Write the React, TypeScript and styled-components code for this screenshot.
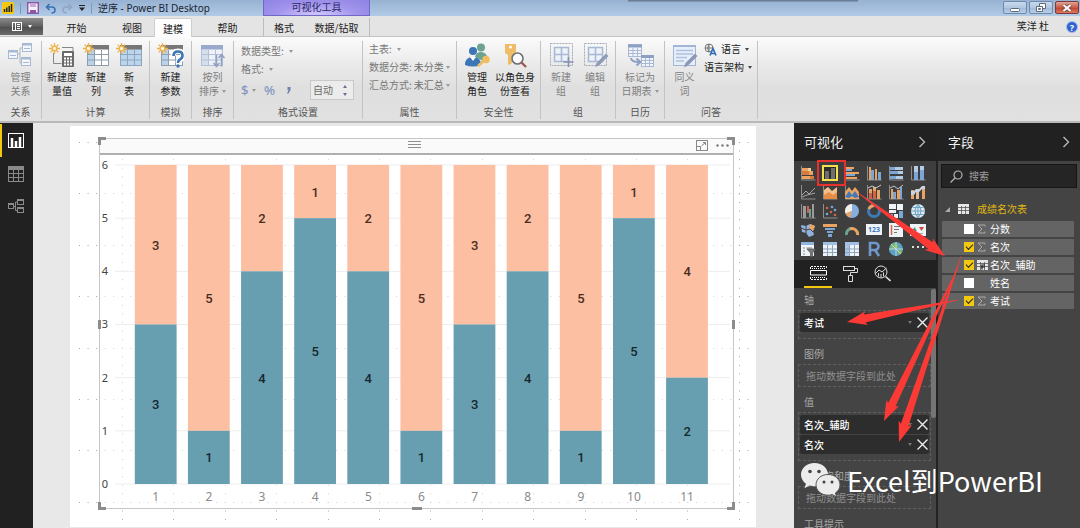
import React from "react";
import styled, { createGlobalStyle, css } from "styled-components";

const SANS = `"Noto Sans", "Noto Sans CJK SC", sans-serif`;
const CJK = `"Noto Sans CJK SC", "Noto Sans", sans-serif`;

const GlobalStyle = createGlobalStyle`
  *, *::before, *::after { box-sizing: border-box; }
  body { margin: 0; font-family: ${CJK}; font-size: 10px; line-height: 14px; background: #e8e8e8; }
  button, input, select { font: inherit; color: inherit; margin: 0; padding: 0; border: 0; background: none; }
  button { cursor: pointer; }
  h2, p, ul { margin: 0; padding: 0; font: inherit; }
  ul { list-style: none; }
  svg { display: block; flex: none; }
`;

/* ---------- shell ---------- */

const Shell = styled.div`
  position: relative;
  display: flex;
  flex-direction: column;
  height: 100vh;
  overflow: hidden;
`;

const TitleBar = styled.header`
  position: relative;
  display: flex;
  align-items: stretch;
  height: 16px;
  flex: none;
  background: linear-gradient(#97b2d2, #b1cae6);
`;

const TopShade = styled.div`
  position: absolute;
  top: 0;
  right: 222px;
  width: 230px;
  height: 2px;
  background: linear-gradient(#5f7288, #8aa2c0);
`;

const QuickAccess = styled.div`
  display: flex;
  align-items: center;
  gap: 6px;
  width: 98px;
  padding-left: 2px;
`;

const QuickButton = styled.button`
  display: flex;
`;

const Divider = styled.span`
  width: 1px;
  height: 11px;
  background: #7f99ba;
`;

const WindowTitle = styled.div`
  width: 165px;
  font-family: ${SANS};
  font-size: 10px;
  line-height: 16px;
  color: #1c2733;
  white-space: nowrap;
`;

const ContextTitle = styled.div`
  width: 107px;
  text-align: center;
  line-height: 13px;
  color: #2c2a66;
  background: radial-gradient(ellipse at 50% 110%, #d6ccff 0, #a294ec 55%, #8d83e4 100%);
  border: solid #6f68c8;
  border-width: 0 1px 1px;
`;

const WindowButtons = styled.div`
  display: flex;
  gap: 2px;
  margin-left: auto;
  padding: 1px 1px 2px 0;
`;

const WindowButton = styled.button<{ $close?: boolean }>`
  display: flex;
  align-items: center;
  justify-content: center;
  width: 24px;
  border: 1px solid ${(p) => (p.$close ? "#7d3a36" : "#7089a8")};
  border-radius: 2px;
  background: ${(p) =>
    p.$close
      ? "linear-gradient(#e0a596, #cb5946 50%, #c0412d 51%, #d97961)"
      : "linear-gradient(#c8daee, #b2c8e1 50%, #9fb8d5 51%, #b8cfe8)"};
`;

const TabRow = styled.nav`
  display: flex;
  align-items: stretch;
  height: 21px;
  flex: none;
  padding-top: 2px;
  background: #e4e4e4;
  border-bottom: 1px solid #c4c4c4;
`;

const FileButton = styled.button`
  display: flex;
  align-items: center;
  justify-content: center;
  gap: 6px;
  width: 43px;
  height: 17px;
  background: linear-gradient(#8b8b8b, #5c5c5c 50%, #4c4c4c 51%, #6c6c6c);
`;

const Tab = styled.button<{ $w: number; $active?: boolean; $edge?: "left" | "right" }>`
  width: ${(p) => p.$w}px;
  height: 19px;
  line-height: 19px;
  text-align: center;
  color: #222;
  white-space: nowrap;
  ${(p) =>
    p.$active &&
    css`
      background: #fdfdfd;
      border: solid #cfcfcf;
      border-width: 1px 1px 0;
      border-radius: 2px 2px 0 0;
      line-height: 17px;
    `}
  ${(p) => p.$edge && `border-${p.$edge}: 1px solid #bdbdbd;`}
`;

const UserName = styled.span`
  margin-left: auto;
  padding-right: 17px;
  line-height: 16px;
  color: #222;
`;

const HelpButton = styled.button`
  width: 12px;
  height: 12px;
  margin: 3px 2px 0 0;
  border: 1px solid #a8c0ea;
  border-radius: 50%;
  background: #2f62cf;
  color: #fff;
  font-family: ${SANS};
  font-size: 9px;
  font-weight: 700;
  line-height: 9px;
`;

/* ---------- ribbon ---------- */

const Ribbon = styled.section`
  display: flex;
  height: 86px;
  flex: none;
  padding: 4px 0 2px;
  background: linear-gradient(#fbfbfb, #e9e9e9 35%, #dfdfdf 60%, #e1e1e1);
  border-bottom: 2px solid #b9b9b9;
`;

const Group = styled.div<{ $w: number }>`
  display: flex;
  flex-direction: column;
  width: ${(p) => p.$w}px;
  flex: none;
  border-right: 1px solid #c3c3c3;
`;

const GroupBody = styled.div<{ $pad?: number; $gap?: number }>`
  display: flex;
  justify-content: ${(p) => (p.$pad === undefined ? "center" : "flex-start")};
  gap: ${(p) => p.$gap ?? 0}px;
  padding-left: ${(p) => p.$pad ?? 0}px;
  height: 65px;
`;

const GroupName = styled.div`
  text-align: center;
  color: #555;
  line-height: 14px;
`;

const BigButton = styled.button<{ $w: number }>`
  display: flex;
  flex-direction: column;
  align-items: center;
  gap: 2px;
  width: ${(p) => p.$w}px;
  padding-top: 2px;
  line-height: 14px;
  color: #222;
  white-space: nowrap;
  &:disabled { color: #808080; }
`;

const Lines = styled.span`
  display: flex;
  flex-direction: column;
  align-items: center;
`;

const Line = styled.span`
  display: flex;
  align-items: center;
  gap: 3px;
`;

const Caret = styled.i<{ $c?: string; $up?: boolean }>`
  width: 0;
  height: 0;
  border: 2px solid transparent;
  ${(p) => (p.$up ? "border-bottom" : "border-top")}: 3px solid ${(p) => p.$c ?? "#999"};
  ${(p) => (p.$up ? "border-top" : "border-bottom")}: 0;
`;

const FieldStack = styled.div<{ $gap: number; $top?: number }>`
  display: flex;
  flex-direction: column;
  gap: ${(p) => p.$gap}px;
  padding-top: ${(p) => p.$top ?? 0}px;
`;

const FormatRow = styled.div<{ $gap?: number }>`
  display: flex;
  align-items: center;
  gap: ${(p) => p.$gap ?? 2}px;
  color: #777;
  white-space: nowrap;
`;

const PlainSelect = styled.select<{ $w: number }>`
  appearance: none;
  width: ${(p) => p.$w}px;
  height: 14px;
  color: #6f6f6f;
`;

const SymbolButton = styled.button`
  display: flex;
  align-items: center;
  gap: 4px;
  width: 20px;
  height: 20px;
  font-family: ${SANS};
  font-size: 13px;
  font-weight: 500;
  color: #8298c0;
`;

const Spinner = styled.div`
  display: flex;
  align-items: center;
  width: 44px;
  height: 20px;
  padding: 0 4px 0 2px;
  border: 1px solid #c9c9c9;
  background: #ececec;
`;

const SpinInput = styled.input`
  width: 30px;
  color: #6b6b6b;
`;

const SpinArrows = styled.span`
  display: flex;
  flex-direction: column;
  gap: 5px;
`;

const SmallButton = styled.button`
  display: flex;
  align-items: center;
  gap: 4px;
  height: 14px;
  color: #222;
  white-space: nowrap;
`;

/* ---------- workspace ---------- */

const Workspace = styled.main`
  display: flex;
  flex: 1;
  min-height: 0;
  background: #e8e8e8;
`;

const ViewBar = styled.nav`
  width: 33px;
  flex: none;
  padding-top: 1px;
  background: #212121;
`;

const ViewButton = styled.button<{ $active?: boolean }>`
  display: flex;
  align-items: center;
  justify-content: center;
  width: 100%;
  height: 33px;
  padding-right: 3px;
  border-left: 2px solid ${(p) => (p.$active ? "#f2c811" : "transparent")};
`;

const CanvasArea = styled.div`
  display: flex;
  flex: 1;
  min-width: 0;
  padding: 3px 38px 1px 37px;
`;

const Sheet = styled.div`
  position: relative;
  display: flex;
  flex: 1;
  min-width: 0;
  padding: 12px 22px 18px 29px;
  background: #fff;
`;

const DotGrid = styled.svg`
  position: absolute;
  inset: 0;
  width: 100%;
  height: 100%;
`;

const Visual = styled.section`
  position: relative;
  display: flex;
  flex-direction: column;
  flex: 1;
  min-width: 0;
  border: 1px solid #c6c6c6;
  background: rgba(255, 255, 255, 0.5);
`;

const VisualHeader = styled.div`
  display: grid;
  grid-template-columns: 1fr auto 1fr;
  height: 16px;
  flex: none;
  padding: 0 4px 2px 0;
  background: #fafafa;
  border-bottom: 2px solid #b0b0b0;
`;

const Grip = styled.span`
  width: 13px;
  height: 7px;
  margin-top: 2px;
  border: solid #8f8f8f;
  border-width: 1px 0;
  background: linear-gradient(#8f8f8f, #8f8f8f) center / 100% 1px no-repeat;
`;

const VisualTools = styled.div`
  display: flex;
  justify-content: flex-end;
  gap: 8px;
`;

const ChartSvg = styled.svg`
  width: 100%;
  flex: 1;
  min-height: 0;
`;

const Handle = styled.i<{ $v: "top" | "bottom" | "mid"; $h: "left" | "right" | "mid" }>`
  position: absolute;
  ${(p) => {
    const corner = p.$v !== "mid" && p.$h !== "mid";
    const v = p.$v === "mid" ? "top: calc(50% - 4px);" : `${p.$v}: -2px;`;
    const h = p.$h === "mid" ? "left: calc(50% - 5px);" : `${p.$h}: -2px;`;
    if (corner)
      return `${v}${h} width: 8px; height: 8px; border-${p.$v}: 3px solid #8c8c8c; border-${p.$h}: 3px solid #8c8c8c;`;
    return `${v}${h} background: #8c8c8c; width: ${p.$v === "mid" ? 3 : 10}px; height: ${p.$v === "mid" ? 9 : 3}px;`;
  }}
`;

/* ---------- right panes ---------- */

const Pane = styled.aside<{ $w: number; $rule?: boolean }>`
  display: flex;
  flex-direction: column;
  width: ${(p) => p.$w}px;
  flex: none;
  background: #444;
  color: #fff;
  ${(p) => p.$rule && "border-right: 2px solid #222;"}
`;

const PaneHeader = styled.div`
  display: flex;
  align-items: center;
  justify-content: space-between;
  height: 38px;
  flex: none;
  padding: 0 10px;
  background: #212121;
`;

const PaneTitle = styled.h2`
  font-size: 13px;
  line-height: 18px;
  color: #f2f2f2;
`;

const IconButton = styled.button`
  display: flex;
  align-items: center;
  justify-content: center;
`;

const Gallery = styled.div`
  display: grid;
  grid-template-columns: repeat(6, 22px);
  grid-auto-rows: 19px;
  flex: none;
  height: 99px;
  padding: 2px 3px;
  background: #3e3e3e;
`;

const PaneTabs = styled.div`
  display: flex;
  gap: 4px;
  height: 28px;
  flex: none;
  padding-left: 10px;
  background: #212121;
`;

const PaneTab = styled.button<{ $active?: boolean }>`
  display: flex;
  justify-content: center;
  align-items: center;
  width: 28px;
  border-bottom: 2px solid ${(p) => (p.$active ? "#f2c811" : "transparent")};
`;

const Wells = styled.div`
  display: flex;
  flex: 1;
  min-height: 0;
  overflow: hidden;
  background: #444;
`;

const WellList = styled.div`
  display: flex;
  flex-direction: column;
  flex: 1;
  gap: 8px;
  padding: 5px 0 0 4px;
`;

const ScrollThumb = styled.div`
  width: 5px;
  height: 129px;
  margin-top: 1px;
  border-radius: 2px;
  background: #757575;
`;

const WellSection = styled.section`
  display: flex;
  flex-direction: column;
  flex: none;
  gap: 3px;
`;

const WellName = styled.h2`
  padding-left: 6px;
  line-height: 14px;
  color: #a8a8a8;
`;

const WellBox = styled.div<{ $filled?: boolean }>`
  display: flex;
  flex-direction: column;
  gap: 1px;
  padding: ${(p) => (p.$filled ? "2px 1px 6px" : "0 7px")};
  line-height: ${(p) => (p.$filled ? 14 : 21)}px;
  border: 1px dashed #5f5f5f;
  color: #8f8f8f;
`;

const WellItem = styled.div`
  display: flex;
  align-items: center;
  height: 19px;
  padding: 0 1px 0 4px;
  gap: 5px;
  border-radius: 2px;
  background: #2d2d2d;
  color: #fff;
`;

const WellItemName = styled.span`
  flex: 1;
  font-weight: 500;
`;

const FieldsBody = styled.div`
  padding: 3px 3px 0;
`;

const SearchBox = styled.label`
  display: flex;
  align-items: center;
  gap: 6px;
  height: 24px;
  padding-left: 8px;
  border: 1px solid #161616;
  background: #252525;
`;

const SearchInput = styled.input`
  flex: 1;
  min-width: 0;
  outline: 0;
  &::placeholder { color: #a0a0a0; opacity: 1; }
`;

const TableRow = styled.div`
  display: flex;
  align-items: center;
  height: 18px;
  margin: 12px 0 3px;
  padding-left: 4px;
  gap: 8px;
  color: #e3b90f;
`;

const FieldList = styled.ul`
  display: flex;
  flex-direction: column;
  gap: 2px;
  padding: 0 3px 0 1px;
`;

const FieldRow = styled.label`
  display: flex;
  align-items: center;
  height: 16px;
  gap: 3px;
  padding-left: 22px;
  background: #646464;
  border-radius: 1px;
  color: #fff;
`;

const FieldKind = styled.span`
  display: flex;
  width: 10px;
`;

const Check = styled.input`
  appearance: none;
  width: 10px;
  height: 10px;
  background: #fff;
  &:checked { background: #f2c811; }
  &:checked::after {
    content: "";
    display: block;
    width: 7px;
    height: 4px;
    margin: 2px 0 0 2px;
    border: solid #222;
    border-width: 0 0 1px 1px;
    transform: rotate(-45deg);
  }
`;

/* ---------- overlays ---------- */

const Annotations = styled.svg`
  position: absolute;
  top: 0;
  right: 0;
  pointer-events: none;
`;

const Watermark = styled.div`
  position: absolute;
  right: 37px;
  bottom: 29px;
  display: flex;
  align-items: center;
  gap: 6px;
  font-size: 27px;
  line-height: 36px;
  color: #fff;
  white-space: nowrap;
  pointer-events: none;
`;

/* ---------- ribbon icons ---------- */

const PALE = "#a9b9d3";

const Burst = () => (
  <g stroke="#eeb04a" strokeWidth="1.3">
    <path d="M5.5 0v11M0 5.5h11M1.6 1.6l7.8 7.8M9.4 1.6L1.6 9.4" />
    <circle cx="5.5" cy="5.5" r="2.4" fill="#fff3d4" />
  </g>
);

const RibbonIcon = ({ children }: { children: React.ReactNode }) => (
  <svg width="27" height="25" viewBox="0 0 27 25" fill="none">{children}</svg>
);

const TableShape = ({ fill = "#fff", left = fill, head = "#777", line = "#8f9dac" }) => (
  <g>
    <rect x="4.5" y="2.5" width="21" height="20" fill={fill} stroke={line} />
    <rect x="5" y="7" width="6.5" height="15" fill={left} />
    <rect x="4" y="2" width="22" height="4.5" fill={head} />
    <path d="M5 11.5h20M5 17h20M11.5 7v15M18.5 7v15" stroke={line} />
  </g>
);

const MiniTable = ({ x, y, w = 9, h = 8, c = PALE }: { x: number; y: number; w?: number; h?: number; c?: string }) => (
  <g transform={`translate(${x} ${y})`}>
    <rect x=".5" y=".5" width={w - 1} height={h - 1} fill="#f3f6fb" stroke={c} />
    <rect width={w} height="2.5" fill={c} />
    <path d={`M2 ${h - 3.5}h${w - 4}`} stroke={c} />
  </g>
);

const icons = {
  relations: (
    <RibbonIcon>
      <path d="M10 11h3V5h4M13 11v9h3" stroke="#b3b3b3" />
      <MiniTable x={1} y={7} w={10} h={9} /><MiniTable x={15} y={0} w={10} h={9} /><MiniTable x={14} y={14} w={10} h={9} />
    </RibbonIcon>
  ),
  measure: (
    <RibbonIcon>
      <path d="M4.5 10v10.500h8M13 4.500h11v6" stroke="#888" />
      <rect x="13" y="8" width="12" height="16" rx="1" fill="#6a6a6a" />
      <rect x="15" y="10" width="8" height="3" fill="#fff" />
      <path d="M15 15.500h8M15 18.500h8M15 21.500h8" stroke="#fff" strokeWidth="2" strokeDasharray="2 1" />
      <Burst />
    </RibbonIcon>
  ),
  column: <RibbonIcon><TableShape left="#b9d3ec" /><Burst /></RibbonIcon>,
  table: <RibbonIcon><TableShape fill="#bdd5ea" line="#8ba6c0" /><Burst /></RibbonIcon>,
  param: (
    <RibbonIcon>
      <TableShape left="#b9d3ec" />
      <path d="M16 13q0-5 5-5t5 4.500q0 3-3 4.200-2 1-2 3.300" stroke="#fff" strokeWidth="5" />
      <path d="M16.500 13q0-4.500 4.500-4.500t4.500 4q0 2.500-2.500 4-2 1-2 3.500" stroke="#3d76b5" strokeWidth="2.600" />
      <circle cx="21" cy="23" r="1.700" fill="#3d76b5" />
      <Burst />
    </RibbonIcon>
  ),
  sort: (
    <RibbonIcon>
      <g transform="translate(-2 0)"><TableShape fill="#eef1f7" left="#d5deec" head="#98a9cb" line="#b4c0d8" /></g>
      <path d="M17.500 12v11M14.500 20l3 3.500 3-3.500M22.500 23.500V12M19.500 15l3-3.500 3 3.500" stroke="#93a2bf" strokeWidth="1.600" />
    </RibbonIcon>
  ),
  roles: (
    <RibbonIcon>
      <circle cx="17" cy="4.500" r="4" fill="#6ba38e" />
      <path d="M11 14q1-5 6-5t7 6l-5 3z" fill="#6ba38e" />
      <circle cx="9" cy="8" r="4" fill="#3b76b6" />
      <path d="M1 22q0-8 8-8t8 8q-8 3-16 0z" fill="#3b76b6" />
      <path d="M6 14l3 4 3-4z" fill="#fff" />
      <path d="M14 23l7-6" stroke="#f0bd62" strokeWidth="2.800" />
      <circle cx="22" cy="16.500" r="3.800" fill="#f0bd62" />
    </RibbonIcon>
  ),
  viewAs: (
    <RibbonIcon>
      <path d="M3 1h11v9l-3 2v2l-2 2 2 2-2 3-3 1V12L3 10z" fill="#efbd68" />
      <circle cx="8.500" cy="4" r="1.500" fill="#fff" />
      <circle cx="15.500" cy="15.500" r="5.500" fill="#fbfbfb" stroke="#6d7075" strokeWidth="1.600" />
      <path d="M19.500 19.500l4.500 4.500" stroke="#a05a4d" strokeWidth="2.400" />
    </RibbonIcon>
  ),
  newGroup: (
    <RibbonIcon>
      <rect x="2.500" y=".5" width="22" height="22" stroke="#a2a9b6" strokeDasharray="2 1" />
      <rect x="6.500" y="4.500" width="14" height="14" fill="#edf1f8" stroke={PALE} strokeWidth="1.500" />
      <path d="M13.500 4v15M6 11.500h15" stroke={PALE} strokeWidth="1.500" />
      <path d="M20.500 14v10M15.500 19h10" stroke="#8392b0" strokeWidth="1.600" />
    </RibbonIcon>
  ),
  editGroup: (
    <RibbonIcon>
      <rect x="2.500" y=".5" width="22" height="22" stroke="#a2a9b6" strokeDasharray="2 1" />
      <rect x="6.500" y="4.500" width="14" height="14" fill="#edf1f8" stroke={PALE} strokeWidth="1.500" />
      <path d="M13.500 4v15M6 11.500h15" stroke={PALE} strokeWidth="1.500" />
      <path d="M13 24l1.500-4L24 10.500l2.500 2.500-9.500 9.500z" fill="#8f9cb8" />
    </RibbonIcon>
  ),
  dateTable: (
    <RibbonIcon>
      <rect x="1.500" y="1.500" width="13" height="12" fill="#f1f4fa" stroke={PALE} />
      <path d="M1 3h14" stroke="#8da0c4" strokeWidth="3" />
      <path d="M2 7.500h12M2 10.500h12M6 5v8M10.500 5v8" stroke={PALE} />
      <path d="M4 15q0 4 8 4M9.500 15.500l4 3.500-4 3.500" stroke="#8da0c4" strokeWidth="2" />
      <rect x="14.500" y="12.500" width="12" height="11" fill="#f1f4fa" stroke={PALE} />
      <path d="M14 13.500h13" stroke="#8da0c4" strokeWidth="3" />
      <path d="M15 17.500h11M15 20.500h11M18.500 15v8M22.500 15v8" stroke={PALE} />
    </RibbonIcon>
  ),
  synonyms: (
    <RibbonIcon>
      <rect x="2.500" y="2.500" width="22" height="20" fill="#e6eefa" stroke="#a3b5d6" />
      <path d="M2 3h23" stroke="#a3b5d6" strokeWidth="2" />
      <path d="M5 7.500h17M5 11h17M5 14.500h11M5 18h8" stroke="#b0c1df" strokeWidth="1.300" />
      <path d="M13 24.500l1.500-4.500L24 10.500l2.500 2.500-9.500 9.500z" fill="#8b98b5" />
    </RibbonIcon>
  ),
};

/* ---------- visualization gallery ---------- */

const O = "#e9a363";
const B = "#7ba6d6";
const G = "#8d8d8d";
const W = "#eef3f8";

const axis = <path d="M1.500 1v14h14" stroke={G} fill="none" />;

type Bar = [number, number, number, number, string];
const bars = (list: Bar[]) => list.map(([x, y, w, h, c], i) => <rect key={i} x={x} y={y} width={w} height={h} fill={c} />);
const gridIcon = (left: string, head: string) => (
  <>
    <rect x="1" y="1" width="14" height="14" fill={W} />
    <rect x="1" y="1" width="4" height="14" fill={left} />
    <rect x="1" y="1" width="14" height="3" fill={head} />
    <path d="M1 8h14M1 11.500h14M5.500 4v11M10.500 4v11" stroke="#8fa5bd" />
  </>
);

const gallery: { name: string; art: React.ReactNode; active?: boolean }[] = [
  { name: "堆积条形图", art: <>{axis}{bars([[2, 3, 6, 3, O], [8, 3, 3, 3, "#f6cf9f"], [2, 6, 7, 4, "#d77a3b"], [9, 6, 4, 4, O], [2, 11, 8, 3, O], [10, 11, 4, 3, "#d77a3b"]])}</> },
  { name: "堆积柱形图", active: true, art: <><rect x="0" y="0" width="16" height="16" fill="#2c2c2c" />{bars([[3, 6, 4, 8, "#6e6e6e"], [9, 3, 4, 11, "#6e6e6e"]])}</> },
  { name: "簇状条形图", art: <>{axis}{bars([[2, 2, 8, 2, O], [2, 4, 6, 2, B], [2, 7, 13, 2, O], [2, 9, 9, 2, B], [2, 12, 11, 2, O]])}</> },
  { name: "簇状柱形图", art: <>{axis}{bars([[3, 2, 2, 13, O], [5, 5, 3, 10, B], [9, 4, 2, 11, O], [12, 7, 3, 8, B]])}</> },
  { name: "百分比堆积条形图", art: <>{axis}{bars([[2, 2, 5, 3, B], [7, 2, 8, 3, "#b4cbe4"], [2, 6, 8, 3, B], [10, 6, 5, 3, "#b4cbe4"], [2, 11, 6, 3, B], [8, 11, 7, 3, "#b4cbe4"]])}</> },
  { name: "百分比堆积柱形图", art: <>{axis}{bars([[4, 1, 4, 6, "#b4cbe4"], [4, 7, 4, 8, B], [10, 1, 4, 4, "#b4cbe4"], [10, 5, 4, 10, B]])}</> },
  { name: "折线图", art: <>{axis}<path d="M2 11l4-4 3 3 6-6M2 13l5-2 8-2" stroke="#a7a7a7" fill="none" /></> },
  { name: "分区图", art: <>{axis}<path d="M2 15V6l4-3 4 4 5-4v12z" fill="#f3c08b" /><path d="M2 15v-4l5-3 4 3 4-3v7z" fill="#e58d45" /></> },
  { name: "堆积面积图", art: <>{axis}<path d="M1 15V8l4-5 3 4 3-4 4 5v7z" fill={O} /><path d="M1 13l4-6 3 4 3-4 4 6-4 1-3-2-3 2z" fill="#4379b9" /></> },
  { name: "折线和堆积柱形图", art: <>{axis}{bars([[3, 5, 3, 10, O], [3, 9, 3, 6, "#d3624a"], [7, 3, 3, 12, O], [7, 7, 3, 8, "#d3624a"], [11, 6, 3, 9, O]])}<path d="M2 4l4-2 4 2 5-3" stroke="#c9c9c9" fill="none" /></> },
  { name: "折线和簇状柱形图", art: <>{axis}{bars([[3, 5, 2, 10, O], [5, 8, 3, 7, B], [9, 6, 3, 9, O], [12, 3, 2, 12, B]])}<path d="M2 4l4-2 4 3 5-4" stroke="#c9c9c9" fill="none" /></> },
  { name: "功能区图", art: <>{bars([[1, 6, 3, 9, O], [6, 5, 3, 10, "#e6bd93"], [12, 2, 3, 13, O]])}<path d="M1 7h3l2-2h3l3-3h3v3h-3L9 8H6l-2 3H1z" fill="#c9d4e2" /></> },
  { name: "瀑布图", art: <>{axis}{bars([[3, 3, 3, 12, "#9c9c9c"], [7, 3, 2, 7, "#d3624a"], [9, 6, 2, 8, "#6ba38e"], [12, 1, 2, 14, "#9c9c9c"]])}</> },
  { name: "散点图", art: <>{axis}<g fill="#d3624a"><circle cx="5" cy="5" r="1.300" /><circle cx="9" cy="9" r="1.300" /><circle cx="13" cy="12" r="1.300" /></g><g fill={B}><circle cx="10" cy="4" r="1.300" /><circle cx="5" cy="11" r="1.300" /><circle cx="13" cy="7" r="1.300" /></g></> },
  { name: "饼图", art: <><circle cx="8" cy="8" r="7" fill="#86aede" /><path d="M8 8V1a7 7 0 0 0-6.500 9.500z" fill="#f5efe6" /><path d="M8 8l-6.500 2.500A7 7 0 0 0 6 14.700z" fill={O} /></> },
  { name: "环形图", art: <><circle cx="8" cy="8" r="5.500" stroke="#3f7ab8" strokeWidth="3" fill="none" /><path d="M8 2.500A5.500 5.500 0 0 0 3 6" stroke={O} strokeWidth="3" fill="none" /></> },
  { name: "树状图", art: <>{bars([[1, 1, 7, 5, W], [1, 7, 7, 3, W], [9, 1, 6, 6, W], [1, 11, 4, 4, B], [6, 11, 4, 4, W], [11, 8, 4, 7, B]])}</> },
  { name: "地图", art: <><circle cx="8" cy="8" r="7" fill="#dcebf5" /><path d="M8 1v14M1 8h14M2.500 4.500h11M2.500 11.500h11M8 1q-6 7 0 14M8 1q6 7 0 14" stroke="#6fa3bf" fill="none" /></> },
  { name: "着色地图", art: <><path d="M1 3l5 1 4-2 5 2-2 5 1 4-5 2-3-4-4-1z" fill="#8fb3dc" /><path d="M10 2l5 2-2 5-4-2z" fill={O} /><path d="M1 6l5 2 4-1 3 3M6 4v8" stroke="#444" fill="none" /></> },
  { name: "漏斗图", art: <>{bars([[1, 2, 14, 3, O], [3, 6, 10, 2, B], [5, 9, 6, 2, B], [6, 12, 4, 3, B]])}</> },
  { name: "仪表", art: <><path d="M2.500 13A5.500 5.500 0 0 1 8 6.500" stroke="#6ba38e" strokeWidth="3" fill="none" /><path d="M6 7a5.500 5.500 0 0 1 7.500 6" stroke={O} strokeWidth="3" fill="none" /></> },
  { name: "卡片图", art: <><rect x="0" y="2" width="16" height="11" fill={W} /><text x="8" y="10" fontSize="7" fontWeight="700" fontFamily="Noto Sans" textAnchor="middle" fill="#4379b9">123</text></> },
  { name: "多行卡", art: <><rect x="1" y="1" width="14" height="14" fill={W} /><path d="M3.500 3v10" stroke="#d3624a" strokeWidth="1.500" /><path d="M6 4.500h7M6 7.500h5M6 10.500h3" stroke="#777" /></> },
  { name: "KPI", art: <><rect x="0" y="2" width="16" height="12" fill={W} /><path d="M2 9l2.500-4L7 9z" fill="#4d9a7c" /><path d="M9 5h5l-2.500 4z" fill="#d04a3a" /><path d="M3 11.500h10" stroke="#aaa" /></> },
  { name: "切片器", art: <><rect x="1" y="1" width="13" height="14" fill={W} /><path d="M1 2.500h13" stroke="#8fb3dc" strokeWidth="3" /><path d="M3 7h2M3 10h2M3 13h2M6.500 7H12" stroke="#888" /><path d="M7 8h9l-3.500 4v4h-2v-4z" fill="#7a7a7a" stroke="#3e3e3e" strokeWidth=".6" /></> },
  { name: "表", art: gridIcon(W, "#9fbfe3") },
  { name: "矩阵", art: gridIcon("#a9c6e8", "#9fbfe3") },
  { name: "R 视觉对象", art: <path d="M4 15V2h5a3.500 3.500 0 0 1 0 7H5M9 9l4 6" stroke="#6f97cb" strokeWidth="2.600" fill="none" /> },
  { name: "ArcGIS 地图", art: <><circle cx="8" cy="8" r="7" fill="#5a9fc4" /><path d="M3 4q5-4 7 0t-4 4-4 2zM9 9q5-1 5 1t-4 4z" fill="#7fb76a" /><path d="M1 8h14M8 1v14M3 3l10 10" stroke="#cfe3ea" strokeWidth=".8" /></> },
  { name: "更多", art: <g fill="#ddd"><rect x="2" y="5" width="2" height="2" /><rect x="7" y="5" width="2" height="2" /><rect x="12" y="5" width="2" height="2" /></g> },
];

/* ---------- chart ---------- */

const chartRows = [[3, 3], [1, 5], [4, 2], [5, 1], [4, 2], [1, 5], [3, 3], [4, 2], [1, 5], [5, 1], [2, 4]];
const UNIT = 53.17;
const BASE = 329;

const Chart = () => (
  <ChartSvg viewBox="0 0 633 353" role="img" aria-label="堆积柱形图">
    {[0, 1, 2, 3, 4, 5, 6].map((v) => (
      <g key={v}>
        <path d={`M15 ${BASE - v * UNIT}H630`} stroke="#ededed" />
        <text x="5" y={BASE + 4 - v * UNIT} textAnchor="middle" fontSize="11" fontFamily={SANS} fill="#444">{v}</text>
      </g>
    ))}
    {chartRows.map(([low, high], i) => {
      const x = 34.8 + 53.13 * i;
      const mid = x + 21;
      return (
        <g key={i} fontFamily="Roboto, sans-serif" fontSize="13" fontWeight="500" textAnchor="middle">
          <rect x={x} y={BASE - 6 * UNIT} width="41.8" height={high * UNIT} fill="#fcbfa2" />
          <rect x={x} y={BASE - low * UNIT} width="41.8" height={low * UNIT} fill="#689fb0" />
          <text x={mid} y={BASE - (6 - high / 2) * UNIT + 5} fill="#4a2d22">{high}</text>
          <text x={mid} y={BASE - (low / 2) * UNIT + 5} fill="#14282e">{low}</text>
          <text x={mid} y="346" fontFamily={SANS} fontSize="12" fontWeight="400" fill="#8a8a8a">{i + 1}</text>
        </g>
      );
    })}
  </ChartSvg>
);

const SheetDots = () => (
  <DotGrid viewBox="0 0 686 401" preserveAspectRatio="xMinYMin slice" aria-hidden="true">
    <g stroke="#a6a6a6" strokeDasharray="1 7.57">
      {Array.from({ length: 8 }, (_, k) => <path key={k} d={`M9 ${16.5 + Math.round(51.4 * k)}H680`} />)}
      {Array.from({ length: 13 }, (_, k) => <path key={`c${k}`} d={`M${52.5 + Math.round(51.4 * k)} 16V394`} />)}
    </g>
  </DotGrid>
);

/* Tapered arrow: a hairline tail that widens into a solid head. */
const Arrow = ({ from, to }: { from: [number, number]; to: [number, number] }) => {
  const dx = to[0] - from[0];
  const dy = to[1] - from[1];
  const len = Math.hypot(dx, dy);
  const ux = dx / len;
  const uy = dy / len;
  const at = (back: number, side: number) => `${to[0] - ux * back - uy * side},${to[1] - uy * back + ux * side}`;
  const points = [at(len, 0.3), at(18, 4), at(20, 7), at(0, 0), at(20, -7), at(18, -4), at(len, -0.3)].join(" ");
  return <polygon points={points} fill="#fb3a36" />;
};

/* ---------- small shared parts ---------- */

const Chevron = () => (
  <svg width="8" height="12" viewBox="0 0 8 12" fill="none" stroke="#bdbdbd" strokeWidth="1.300"><path d="M1.500 1l5 5-5 5" /></svg>
);
const Cross = () => (
  <svg width="11" height="11" viewBox="0 0 11 11" stroke="#eee" strokeWidth="1.400"><path d="M.5.5l10 10M10.500.5l-10 10" /></svg>
);
const FieldTableIcon = ({ calc }: { calc?: boolean }) => (
  <svg width="11" height="10" viewBox="0 0 11 10">
    <rect width="11" height="10" fill="#e6e6e6" />
    <path d="M0 3.500h11M0 6.500h11M3.500 2v8M7.500 2v8" stroke="#555" strokeWidth=".8" />
    {calc && <path d="M5 9.500V5h3M4 7h4" stroke="#222" strokeWidth="1.200" fill="none" />}
  </svg>
);
const Sigma = () => (
  <svg width="9" height="10" viewBox="0 0 9 10" fill="none" stroke="#aaa"><path d="M8 2.500V1H1l4 4-4 4h7V7.500" /></svg>
);

type BigProps = { icon: React.ReactNode; lines: [string, string]; w: number; disabled?: boolean; menu?: boolean };
const Big = ({ icon, lines, w, disabled, menu }: BigProps) => (
  <BigButton $w={w} disabled={disabled}>
    {icon}
    <Lines>
      <Line>{lines[0]}</Line>
      <Line>{lines[1]}{menu && <Caret />}</Line>
    </Lines>
  </BigButton>
);

const Dropdown = ({ id, label, value = "", w }: { id: string; label: string; value?: string; w: number }) => (
  <FormatRow>
    <label htmlFor={id}>{label}</label>
    <PlainSelect id={id} $w={w} defaultValue={value}><option>{value}</option></PlainSelect>
    <Caret />
  </FormatRow>
);

const Item = ({ name }: { name: string }) => (
  <WellItem>
    <WellItemName>{name}</WellItemName>
    <Caret $c="#777" />
    <IconButton aria-label={`删除 ${name}`}><Cross /></IconButton>
  </WellItem>
);

const fields = [
  { name: "分数", checked: false, kind: "sum" },
  { name: "名次", checked: true, kind: "sum" },
  { name: "名次_辅助", checked: true, kind: "calc" },
  { name: "姓名", checked: false, kind: "" },
  { name: "考试", checked: true, kind: "sum" },
];

export default function App() {
  return (
    <Shell>
      <GlobalStyle />
      <TitleBar>
        <TopShade />
        <QuickAccess>
          <svg width="12" height="12" viewBox="0 0 12 12"><rect width="12" height="12" rx="1" fill="#f2c811" /><path d="M2.500 10V7M4.800 10V5.500M7.200 10V4M9.500 10V2" stroke="#222" strokeWidth="1.500" /></svg>
          <Divider />
          <QuickButton aria-label="保存">
            <svg width="12" height="12" viewBox="0 0 12 12"><path d="M.7.7h10.600v10.600H.7z" fill="#f6effa" stroke="#8a57a8" strokeWidth="1.400" /><path d="M3 1h6v4H3z" fill="#c9a9da" /><path d="M3 8h6v3H3z" fill="#8a57a8" /></svg>
          </QuickButton>
          <QuickButton aria-label="撤消">
            <svg width="11" height="11" viewBox="0 0 11 11" fill="none" stroke="#3b6fb6" strokeWidth="1.600"><path d="M4.500 1L1.500 4l3 3M1.500 4H7q3 0 3 3t-3.500 3" /></svg>
          </QuickButton>
          <QuickButton aria-label="重做">
            <svg width="11" height="11" viewBox="0 0 11 11" fill="none" stroke="#8fa6c4" strokeWidth="1.600"><path d="M6.500 1l3 3-3 3M9.500 4H4Q1 4 1 7t3.500 3" /></svg>
          </QuickButton>
          <QuickButton aria-label="自定义快速访问工具栏">
            <svg width="6" height="6" viewBox="0 0 6 6" fill="#222"><path d="M0 0h6v1H0zM0 2.500h6L3 6z" /></svg>
          </QuickButton>
          <Divider />
        </QuickAccess>
        <WindowTitle>逆序 - Power BI Desktop</WindowTitle>
        <ContextTitle>可视化工具</ContextTitle>
        <WindowButtons>
          <WindowButton aria-label="最小化">
            <svg width="10" height="8" viewBox="0 0 10 8"><rect x=".5" y="4.500" width="9" height="3" rx="1" fill="#fff" stroke="#5c6a7c" /></svg>
          </WindowButton>
          <WindowButton aria-label="还原">
            <svg width="10" height="9" viewBox="0 0 10 9" fill="#fff" stroke="#5c6a7c"><path d="M3.500.5h6v5h-6z" /><path d="M.5 3.500h6v5h-6z" /><path d="M2.500 5.500h2v1h-2z" /></svg>
          </WindowButton>
          <WindowButton $close aria-label="关闭">
            <svg width="10" height="8" viewBox="0 0 10 8"><path d="M1.500 1l7 6M8.500 1l-7 6" stroke="#6b3d3a" strokeWidth="3.600" /><path d="M1.500 1l7 6M8.500 1l-7 6" stroke="#fff" strokeWidth="2.200" /></svg>
          </WindowButton>
        </WindowButtons>
      </TitleBar>

      <TabRow>
        <FileButton aria-label="文件">
          <svg width="10" height="9" viewBox="0 0 10 9" fill="none" stroke="#fff"><rect x=".5" y=".5" width="9" height="8" /><path d="M3.500 1v7M5 2.500h3M5 4.500h3M5 6.500h3" /></svg>
          <Caret $c="#fff" />
        </FileButton>
        <Tab $w={67}>开始</Tab>
        <Tab $w={44}>视图</Tab>
        <Tab $w={38} $active>建模</Tab>
        <Tab $w={71}>帮助</Tab>
        <Tab $w={41} $edge="left">格式</Tab>
        <Tab $w={66} $edge="right">数据/钻取</Tab>
        <UserName>笑洋 杜</UserName>
        <HelpButton aria-label="帮助">?</HelpButton>
      </TabRow>

      <Ribbon>
        <Group $w={42}>
          <GroupBody><Big w={40} icon={icons.relations} lines={["管理", "关系"]} disabled /></GroupBody>
          <GroupName>关系</GroupName>
        </Group>
        <Group $w={108}>
          <GroupBody $pad={2}>
            <Big w={36} icon={icons.measure} lines={["新建度", "量值"]} />
            <Big w={32} icon={icons.column} lines={["新建", "列"]} />
            <Big w={34} icon={icons.table} lines={["新", "表"]} />
          </GroupBody>
          <GroupName>计算</GroupName>
        </Group>
        <Group $w={42}>
          <GroupBody><Big w={40} icon={icons.param} lines={["新建", "参数"]} /></GroupBody>
          <GroupName>模拟</GroupName>
        </Group>
        <Group $w={42}>
          <GroupBody><Big w={40} icon={icons.sort} lines={["按列", "排序"]} disabled menu /></GroupBody>
          <GroupName>排序</GroupName>
        </Group>
        <Group $w={129}>
          <GroupBody $pad={7}>
            <FieldStack $gap={4} $top={3}>
              <Dropdown id="type" label="数据类型:" w={1} />
              <Dropdown id="format" label="格式:" w={1} />
              <FormatRow $gap={3}>
                <SymbolButton aria-label="货币">$<Caret /></SymbolButton>
                <SymbolButton aria-label="百分比">%</SymbolButton>
                <SymbolButton aria-label="千位分隔符">
                  <svg width="4" height="7" viewBox="0 0 4 7" fill="#6f83ab"><path d="M.5 0h3v3L1.500 6.500H0L1.500 3h-1z" /></svg>
                </SymbolButton>
                <Spinner>
                  <SpinInput aria-label="小数位数" defaultValue="自动" />
                  <SpinArrows><Caret $up $c="#6f6f8f" /><Caret $c="#6f6f8f" /></SpinArrows>
                </Spinner>
              </FormatRow>
            </FieldStack>
          </GroupBody>
          <GroupName>格式设置</GroupName>
        </Group>
        <Group $w={94}>
          <GroupBody $pad={6}>
            <FieldStack $gap={4} $top={1}>
              <Dropdown id="home" label="主表:" w={1} />
              <Dropdown id="category" label="数据分类:" value="未分类" w={30} />
              <Dropdown id="summary" label="汇总方式:" value="未汇总" w={30} />
            </FieldStack>
          </GroupBody>
          <GroupName>属性</GroupName>
        </Group>
        <Group $w={84}>
          <GroupBody $pad={2}>
            <Big w={36} icon={icons.roles} lines={["管理", "角色"]} />
            <Big w={40} icon={icons.viewAs} lines={["以角色身", "份查看"]} />
          </GroupBody>
          <GroupName>安全性</GroupName>
        </Group>
        <Group $w={75}>
          <GroupBody $pad={3}>
            <Big w={34} icon={icons.newGroup} lines={["新建", "组"]} disabled />
            <Big w={34} icon={icons.editGroup} lines={["编辑", "组"]} disabled />
          </GroupBody>
          <GroupName>组</GroupName>
        </Group>
        <Group $w={49}>
          <GroupBody><Big w={46} icon={icons.dateTable} lines={["标记为", "日期表"]} disabled menu /></GroupBody>
          <GroupName>日历</GroupName>
        </Group>
        <Group $w={93}>
          <GroupBody $pad={3} $gap={3}>
            <Big w={33} icon={icons.synonyms} lines={["同义", "词"]} disabled />
            <FieldStack $gap={4} $top={1}>
              <SmallButton>
                <svg width="13" height="13" viewBox="0 0 13 13" fill="none"><circle cx="5" cy="5" r="4" stroke="#777" /><path d="M1 5h8M5 1v8M5 1Q2 5 5 9" stroke="#777" /><path d="M6 12.500l3-7 3 7M7 10.500h4" stroke="#2f6db5" strokeWidth="1.600" /></svg>
                语言<Caret $c="#444" />
              </SmallButton>
              <SmallButton>语言架构<Caret $c="#444" /></SmallButton>
            </FieldStack>
          </GroupBody>
          <GroupName>问答</GroupName>
        </Group>
      </Ribbon>

      <Workspace>
        <ViewBar>
          <ViewButton $active aria-label="报表">
            <svg width="16" height="15" viewBox="0 0 16 15" fill="none" stroke="#fff"><rect x=".5" y=".5" width="15" height="14" /><path d="M4 14V5M8 14V8M12 14V4" strokeWidth="2.500" /></svg>
          </ViewButton>
          <ViewButton aria-label="数据">
            <svg width="16" height="16" viewBox="0 0 16 16" fill="none" stroke="#8a8a8a"><rect x=".5" y=".5" width="15" height="15" /><path d="M1 2.500h14" strokeWidth="3" /><path d="M1 7.500h14M1 11.500h14M5.500 3v12M10.500 3v12" /></svg>
          </ViewButton>
          <ViewButton aria-label="关系">
            <svg width="16" height="15" viewBox="0 0 16 15" fill="none" stroke="#8a8a8a"><rect x=".5" y="4.500" width="5" height="5" /><rect x="9.500" y=".5" width="6" height="5" /><rect x="9.500" y="8.500" width="6" height="5" /><path d="M0 5h6M9 1h7M9 9h7" strokeWidth="2" /><path d="M6 7.500h2M7.500 3v8.500M7.500 3h2M7.500 11.500h2" /></svg>
          </ViewButton>
        </ViewBar>

        <CanvasArea>
          <Sheet>
            <SheetDots />
            <Visual>
              <VisualHeader>
                <span />
                <Grip />
                <VisualTools>
                  <IconButton aria-label="焦点模式">
                    <svg width="12" height="11" viewBox="0 0 12 11" fill="none" stroke="#888"><rect x=".5" y=".5" width="11" height="10" /><path d="M.5 6.500h4v4M5.500 6l4-3.500M7 2.500h2.500V5" /></svg>
                  </IconButton>
                  <IconButton aria-label="更多选项">
                    <svg width="13" height="3" viewBox="0 0 13 3" fill="#777"><circle cx="1.500" cy="1.500" r="1.200" /><circle cx="6.500" cy="1.500" r="1.200" /><circle cx="11.500" cy="1.500" r="1.200" /></svg>
                  </IconButton>
                </VisualTools>
              </VisualHeader>
              <Chart />
              <Handle $v="top" $h="left" />
              <Handle $v="top" $h="right" />
              <Handle $v="bottom" $h="left" />
              <Handle $v="bottom" $h="right" />
              <Handle $v="mid" $h="left" />
              <Handle $v="mid" $h="right" />
              <Handle $v="bottom" $h="mid" />
            </Visual>
          </Sheet>
        </CanvasArea>

        <Pane $w={144} $rule>
          <PaneHeader>
            <PaneTitle>可视化</PaneTitle>
            <IconButton aria-label="折叠可视化"><Chevron /></IconButton>
          </PaneHeader>
          <Gallery>
            {gallery.map((g) => (
              <IconButton key={g.name} aria-label={g.name} aria-pressed={!!g.active}>
                <svg width="16" height="16" viewBox="0 0 16 16">
                  {g.art}
                  {g.active && <rect x="1" y="1" width="14" height="14" fill="none" stroke="#f4e04d" strokeWidth="2" />}
                </svg>
              </IconButton>
            ))}
          </Gallery>
          <PaneTabs>
            <PaneTab $active aria-label="字段">
              <svg width="17" height="16" viewBox="0 0 17 16" fill="none" stroke="#fff"><path d="M.5 4V1.500h16V4M.5 12v2.500h16V12" strokeDasharray="2 1" /><path d="M.5 5.500h16v4.500H.5z" /><path d="M2 12.500h13M2 3.500h13" strokeDasharray="1 1" /></svg>
            </PaneTab>
            <PaneTab aria-label="格式">
              <svg width="15" height="17" viewBox="0 0 15 17" fill="none" stroke="#ddd"><rect x=".5" y="1.500" width="11" height="4" /><path d="M12 3.500h2.500v4h-7V10M5.500 10.500h4v6h-4z" /></svg>
            </PaneTab>
            <PaneTab aria-label="分析">
              <svg width="17" height="17" viewBox="0 0 17 17" fill="none" stroke="#ddd"><circle cx="7" cy="7" r="6" /><path d="M1.500 8.500L5 5l3 2 4.500-4M4.500 11.500V8M7 12.500V9M9.500 11.500V7.500" /><path d="M11.500 11.500l5 4.500" strokeWidth="1.600" /></svg>
            </PaneTab>
          </PaneTabs>
          <Wells>
            <WellList>
              <WellSection><WellName>轴</WellName><WellBox $filled><Item name="考试" /></WellBox></WellSection>
              <WellSection><WellName>图例</WellName><WellBox>拖动数据字段到此处</WellBox></WellSection>
              <WellSection><WellName>值</WellName><WellBox $filled><Item name="名次_辅助" /><Item name="名次" /></WellBox></WellSection>
              <WellSection><WellName>色彩饱和度</WellName><WellBox>拖动数据字段到此处</WellBox></WellSection>
              <WellSection><WellName>工具提示</WellName></WellSection>
            </WellList>
            <ScrollThumb />
          </Wells>
        </Pane>

        <Pane $w={142}>
          <PaneHeader>
            <PaneTitle>字段</PaneTitle>
            <IconButton aria-label="折叠字段"><Chevron /></IconButton>
          </PaneHeader>
          <FieldsBody>
            <SearchBox>
              <svg width="13" height="13" viewBox="0 0 13 13" fill="none" stroke="#b5b5b5" strokeWidth="1.200"><circle cx="8" cy="5" r="4" /><path d="M5 8l-4.500 4.500" /></svg>
              <SearchInput type="search" placeholder="搜索" aria-label="搜索" />
            </SearchBox>
            <TableRow>
              <svg width="5" height="5" viewBox="0 0 5 5" fill="#aaa"><path d="M5 0v5H0z" /></svg>
              <FieldTableIcon />
              <span>成绩名次表</span>
            </TableRow>
            <FieldList>
              {fields.map((f) => (
                <li key={f.name}>
                  <FieldRow>
                    <Check type="checkbox" defaultChecked={f.checked} />
                    <FieldKind>
                      {f.kind === "sum" && <Sigma />}
                      {f.kind === "calc" && <FieldTableIcon calc />}
                    </FieldKind>
                    {f.name}
                  </FieldRow>
                </li>
              ))}
            </FieldList>
          </FieldsBody>
        </Pane>
      </Workspace>

      <Annotations width="290" height="460" viewBox="790 0 290 460" aria-hidden="true">
        <rect x="818" y="161" width="27" height="24" fill="none" stroke="#e8302c" strokeWidth="2" />
        <Arrow from={[858, 193]} to={[945, 256]} />
        <Arrow from={[958, 300]} to={[847, 322]} />
        <Arrow from={[958, 268]} to={[884, 421]} />
        <Arrow from={[961, 256]} to={[899, 442]} />
      </Annotations>

      <Watermark>
        <svg width="41" height="37" viewBox="0 0 41 37">
          <path d="M14.500 1C6.500 1 1 6.300 1 12.700c0 3.600 1.900 6.800 5 9l-1.500 4.500 5.200-2.700c1.500.5 3.200.8 4.800.8C22.500 24.300 28 19 28 12.700S22.500 1 14.500 1z" fill="#ececec" />
          <path d="M28 12.500c-7 0-12 4.700-12 10.300S21 33.200 28 33.200c1.500 0 2.900-.2 4.200-.7l4.500 2.500-1.300-4c2.900-1.900 4.600-4.800 4.600-8.200 0-5.600-5-10.300-12-10.300z" fill="#ececec" stroke="#555" />
          <g fill="#444"><circle cx="10" cy="9.500" r="1.800" /><circle cx="19" cy="9.500" r="1.800" /><circle cx="24" cy="20" r="1.500" /><circle cx="32" cy="20" r="1.500" /></g>
        </svg>
        <span>Excel到PowerBI</span>
      </Watermark>
    </Shell>
  );
}
